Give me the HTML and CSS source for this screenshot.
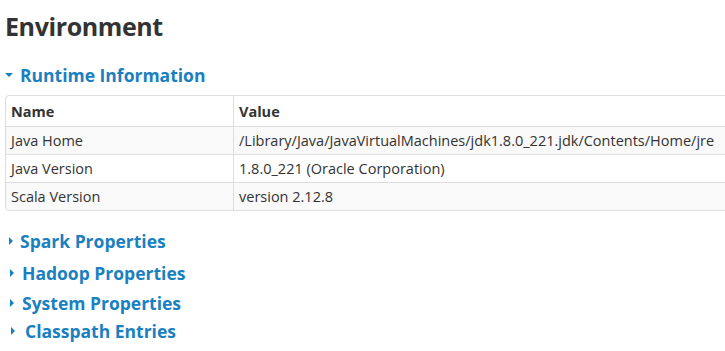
FILE: index.html
```html
<!DOCTYPE html>
<html lang="en">
<head>
<meta charset="UTF-8">
<title>Environment</title>
<link rel="stylesheet" href="styles.css">
</head>
<body>
<h3 class="page-title">Environment</h3>

<div class="section open">
    <h4 class="section-title"><span class="arrow arrow-open"></span><a>Runtime Information</a></h4>
    <table class="table">
        <thead>
            <tr><th class="col-name">Name</th><th>Value</th></tr>
        </thead>
        <tbody>
            <tr><td>Java Home</td><td>/Library/Java/JavaVirtualMachines/jdk1.8.0_221.jdk/Contents/Home/jre</td></tr>
            <tr><td>Java Version</td><td>1.8.0_221 (Oracle Corporation)</td></tr>
            <tr><td>Scala Version</td><td>version 2.12.8</td></tr>
        </tbody>
    </table>
</div>

<div class="section spark">
    <h4 class="section-title"><span class="arrow arrow-closed"></span><a>Spark Properties</a></h4>
</div>
<div class="section hadoop">
    <h4 class="section-title"><span class="arrow arrow-closed"></span><a>Hadoop Properties</a></h4>
</div>
<div class="section system">
    <h4 class="section-title"><span class="arrow arrow-closed"></span><a>System Properties</a></h4>
</div>
<div class="section classpath">
    <h4 class="section-title"><span class="arrow arrow-closed"></span><a>Classpath Entries</a></h4>
</div>
</body>
</html>
```

FILE: styles.css
```css
body {
    margin: 0;
    padding: 0 0 0 5px;
    font-family: "Open Sans", "Noto Sans", sans-serif;
    color: #333;
    background-color: #fff;
    overflow: hidden;
}

.page-title {
    margin: 8px 0 0;
    font-size: 25px;
    font-weight: 700;
    line-height: 36px;
    letter-spacing: -0.4px;
}

.section-title {
    margin: 0;
    display: flex;
    align-items: center;
    font-size: 17.5px;
    font-weight: 700;
    line-height: 24px;
    color: #1a80c0;
}

.section-title a {
    color: #1a80c0;
    text-decoration: none;
}

.open .section-title {
    margin-top: 19px;
    margin-bottom: 8px;
}

.arrow {
    display: inline-block;
    width: 0;
    height: 0;
}

.arrow-open {
    border-left: 4px solid transparent;
    border-right: 4px solid transparent;
    border-top: 4px solid #1a80c0;
    margin-right: 7px;
}

.arrow-closed {
    border-top: 4px solid transparent;
    border-bottom: 4px solid transparent;
    border-left: 4px solid #1a80c0;
    margin-left: 4px;
    margin-right: 7px;
}

.spark .section-title { margin-top: 18px; }
.hadoop .section-title { margin-top: 8px; }
.hadoop .arrow-closed { margin-left: 5px; margin-right: 8px; }
.system .section-title { margin-top: 6px; }
.system .arrow-closed { margin-left: 5px; margin-right: 8px; }
.classpath .section-title { margin-top: 4px; }
.classpath .arrow-closed { margin-left: 6px; margin-right: 10px; }

.table {
    width: 740px;
    border-collapse: separate;
    border-spacing: 0;
    border: 1px solid #ddd;
    border-radius: 4px;
    font-size: 14.5px;
    line-height: 20px;
}

.table th,
.table td {
    text-align: left;
    padding: 4px 5px 3px 5px;
    border-top: 1px solid #ddd;
    border-left: 1px solid #ddd;
    height: 20px;
}

.table th {
    border-top: none;
    font-weight: 700;
    padding-top: 6px;
    padding-bottom: 4px;
}

.table th:first-child,
.table td:first-child {
    border-left: none;
}

.col-name {
    width: 217px;
}

.table tbody tr:nth-child(odd) td {
    background-color: #f9f9f9;
}

.table tbody tr:last-child td:first-child {
    border-bottom-left-radius: 4px;
}
```
